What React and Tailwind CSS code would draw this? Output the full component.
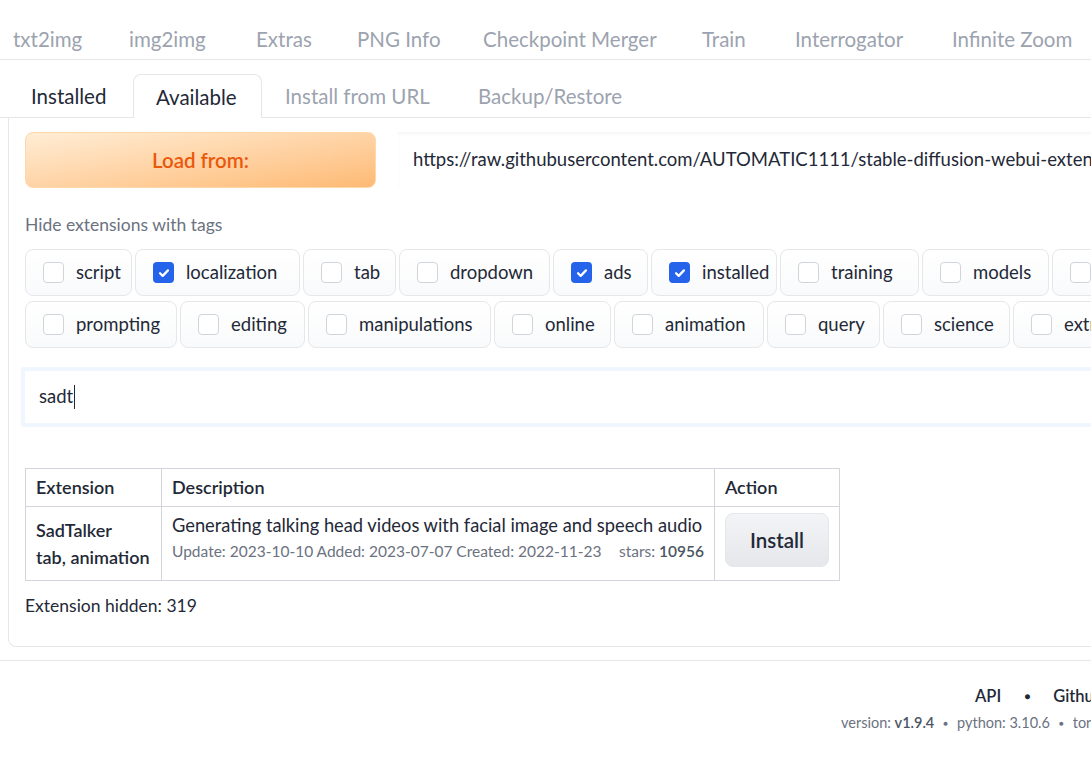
import React from "react";

const topTabs = [
  ["txt2img", "w-[116px]"],
  ["img2img", "w-[127px]"],
  ["Extras", "w-[101px]"],
  ["PNG Info", "w-[126px]"],
  ["Checkpoint Merger", "w-[219px]"],
  ["Train", "w-[93px]"],
  ["Interrogator", "w-[157px]"],
  ["Infinite Zoom", "w-[160px]"],
];

const row1 = [
  ["script", false, "w-[107px]"],
  ["localization", true, "w-[165px]"],
  ["tab", false, "w-[93px]"],
  ["dropdown", false, "w-[151px]"],
  ["ads", true, "w-[95px]"],
  ["installed", true, "w-[126px]"],
  ["training", false, "w-[139px]"],
  ["models", false, "w-[127px]"],
  ["", false, "w-[120px]"],
];
const row2 = [
  ["prompting", false, "w-[152px]"],
  ["editing", false, "w-[125px]"],
  ["manipulations", false, "w-[183px]"],
  ["online", false, "w-[117px]"],
  ["animation", false, "w-[150px]"],
  ["query", false, "w-[113px]"],
  ["science", false, "w-[127px]"],
  ["extras", false, "w-[120px]"],
];

function Check({ checked }) {
  if (checked) {
    return (
      <span className="flex h-[21px] w-[21px] shrink-0 items-center justify-center rounded-[4px] bg-[#2563eb]">
        <svg width="14" height="14" viewBox="0 0 16 16" fill="none">
          <path d="M3.5 8.3l3 3 6-6.3" stroke="white" strokeWidth="2.6" strokeLinecap="round" strokeLinejoin="round" />
        </svg>
      </span>
    );
  }
  return <span className="h-[21px] w-[21px] shrink-0 rounded-[4px] border border-[#d1d5db] bg-white" />;
}

function Chip({ label, checked, w }) {
  return (
    <div className={`${w} shrink-0 flex h-[47px] items-center gap-[12px] rounded-lg border border-[#e5e7eb] bg-gradient-to-b from-white to-[#f9fafb] pl-[17px] text-[18.5px] text-[#1f2937]`}>
      <Check checked={checked} />
      <span className="whitespace-nowrap">{label}</span>
    </div>
  );
}

function Dot() {
  return <span className="text-[10px] leading-none">●</span>;
}

export default function App() {
  return (
    <div className="relative h-[757px] w-[1091px] overflow-hidden bg-white text-[#1f2937]" style={{ fontFamily: '"Source Sans Pro", Lato, "Noto Sans", sans-serif' }}>
      {/* top tabs */}
      <div className="flex h-[60px] w-[1400px] items-center border-b border-[#e5e7eb] pl-[13px] pt-[20px] text-[20.5px] text-[#9ca3af]">
        {topTabs.map(([t, w]) => (
          <div key={t} className={`${w} shrink-0 whitespace-nowrap`}>{t}</div>
        ))}
      </div>

      {/* sub tabs */}
      <div className="flex h-[58px] w-[1400px] items-end border-b border-[#e5e7eb] pl-[8px] text-[20.5px]">
        <div className="flex h-[44px] w-[125px] items-center pl-[23px] pt-[2px] text-[#1f2937]">Installed</div>
        <div className="relative -mb-px flex h-[44px] w-[129px] items-center rounded-t-lg border border-b-0 border-[#e5e7eb] bg-white pl-[22px] pt-[2px] text-[#1f2937]">Available</div>
        <div className="flex h-[44px] w-[193px] items-center pl-[23px] pt-[2px] text-[#9ca3af]">Install from URL</div>
        <div className="flex h-[44px] items-center pl-[23px] pt-[2px] text-[#9ca3af]">Backup/Restore</div>
      </div>

      {/* panel */}
      <div className="ml-[8px] w-[1200px] rounded-bl-lg border-b border-l border-[#e5e7eb] pb-[26px] pl-[16px] pt-[14px]">
        <div className="flex items-stretch gap-[22px]">
          <div className="flex h-[56px] w-[351px] shrink-0 items-center justify-center rounded-lg border border-[#fed7aa] bg-gradient-to-br from-[#ffedd5] to-[#fdba74] text-[20.5px] font-semibold text-[#ea580c]">
            Load from:
          </div>
          <div className="flex h-[56px] flex-1 items-center bg-white pl-[15px] text-[18.5px] text-[#1f2937] shadow-[inset_0_2px_3px_rgba(0,0,0,0.04)]">
            <span className="whitespace-nowrap">https://raw.githubusercontent.com/AUTOMATIC1111/stable-diffusion-webui-extensions/master/index.json</span>
          </div>
        </div>

        <div className="mt-[24px] text-[17.5px] text-[#6b7280]">Hide extensions with tags</div>

        <div className="mt-[11px] flex flex-col gap-[5px]">
          <div className="flex gap-[3px]">
            {row1.map(([l, c, w], i) => <Chip key={i} label={l} checked={c} w={w} />)}
          </div>
          <div className="flex gap-[3px]">
            {row2.map(([l, c, w], i) => <Chip key={i} label={l} checked={c} w={w} />)}
          </div>
        </div>

        <div className="-ml-[4px] mt-[19px] rounded-[2px] border-[4px] border-[#eff6ff] bg-white">
          <div className="flex h-[52px] items-center pl-[14px] text-[18.5px] text-[#1f2937]">
            sadt<span className="ml-[1px] inline-block h-[24px] w-px bg-[#1f2937]" />
          </div>
        </div>

        <table className="mt-[41px] w-[814px] table-fixed border-collapse text-[18px]">
          <colgroup>
            <col className="w-[136px]" />
            <col className="w-[553px]" />
            <col className="w-[125px]" />
          </colgroup>
          <thead>
            <tr className="h-[38px]">
              <th className="border border-[#d1d5db] px-[10px] text-left font-semibold">Extension</th>
              <th className="border border-[#d1d5db] px-[10px] text-left font-semibold">Description</th>
              <th className="border border-[#d1d5db] px-[10px] text-left font-semibold">Action</th>
            </tr>
          </thead>
          <tbody>
            <tr className="h-[74px]">
              <td className="border border-[#d1d5db] px-[10px] align-middle font-semibold leading-[27px]">
                <div>SadTalker</div>
                <div className="whitespace-nowrap">tab, animation</div>
              </td>
              <td className="border border-[#d1d5db] px-[10px] align-top pt-[6px]">
                <div className="whitespace-nowrap text-[18.3px] leading-[24px]">Generating talking head videos with facial image and speech audio</div>
                <div className="mt-[3px] flex justify-between whitespace-nowrap text-[15.5px] leading-[22px] text-[#6b7280]">
                  <span>Update: 2023-10-10 Added: 2023-07-07 Created: 2022-11-23</span>
                  <span>stars: <b className="font-semibold text-[#4b5563]">10956</b></span>
                </div>
              </td>
              <td className="border border-[#d1d5db] px-[10px] align-top pt-[6px]">
                <div className="flex h-[54px] w-[104px] items-center justify-center rounded-lg border border-[#e5e7eb] bg-gradient-to-b from-[#f3f4f6] to-[#e5e7eb] text-[20.5px] font-semibold">
                  Install
                </div>
              </td>
            </tr>
          </tbody>
        </table>

        <div className="mt-[12px] text-[17.5px]">Extension hidden: 319</div>
      </div>

      {/* footer */}
      <div className="mt-[13px] w-[1400px] border-t border-[#e5e7eb]">
        <div className="flex items-center gap-[23px] pl-[975px] pt-[23px] text-[16.5px] font-semibold">
          <span>API</span><Dot /><span>Github</span><Dot /><span>Gradio</span>
        </div>
        <div className="flex items-center gap-[9px] pl-[841px] pt-[4px] text-[14.5px] text-[#6b7280]">
          <span>version: <b className="font-semibold text-[#4b5563]">v1.9.4</b></span><span className="text-[8px]">●</span><span>python: 3.10.6</span><span className="text-[8px]">●</span><span>torch: 2.1.2+cu121</span>
        </div>
      </div>
    </div>
  );
}
